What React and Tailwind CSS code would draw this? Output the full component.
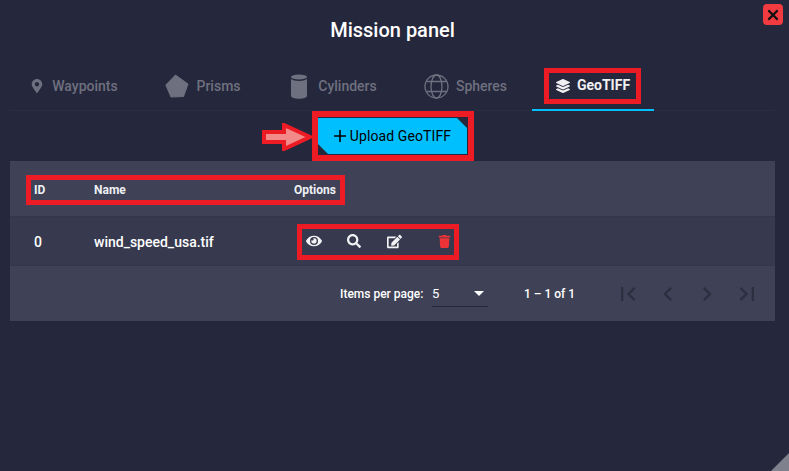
import React from "react";
import { FaMapMarkerAlt, FaLayerGroup, FaEye, FaSearch, FaEdit, FaTrash } from "react-icons/fa";

function Pentagon() {
  return (
    <svg width="24" height="24" viewBox="0 0 24 24" fill="currentColor" stroke="currentColor" strokeWidth="1" strokeLinejoin="round">
      <path d="M10.500 1 L23 10 L18.500 22.500 L6 23 L0.800 11 Z" />
    </svg>
  );
}

function Cylinder() {
  return (
    <svg width="18" height="25" viewBox="0 0 18 25" fill="currentColor">
      <ellipse cx="9" cy="3" rx="8" ry="2.6" />
      <path d="M1 5c1.5 1.3 4.5 2 8 2s6.5-.7 8-2v17c0 1.6-3.6 2.8-8 2.8S1 23.600 1 22z" />
    </svg>
  );
}

function Globe() {
  return (
    <svg width="25" height="25" viewBox="0 0 25 25" fill="none" stroke="currentColor" strokeWidth="1.3">
      <circle cx="12.5" cy="12.500" r="11.500" />
      <ellipse cx="12.5" cy="12.500" rx="5.500" ry="11.500" />
      <path d="M2.500 7.500h20M2.500 17.500h20" />
    </svg>
  );
}

function PageIcon({ d }) {
  return (
    <svg width="28" height="28" viewBox="0 0 24 24" fill="#2d2f41">
      <path d={d} />
    </svg>
  );
}

const tabs = [
  { label: "Waypoints", icon: <FaMapMarkerAlt size={14} />, width: "w-[128px]", gap: "gap-[8px]" },
  { label: "Prisms", icon: <Pentagon />, width: "w-[128px]", gap: "gap-[7px]" },
  { label: "Cylinders", icon: <Cylinder />, width: "w-[131px]", gap: "gap-[10px]" },
  { label: "Spheres", icon: <Globe />, width: "w-[131px]", gap: "gap-[7px]" },
];

const pageIcons = [
  "M18.41 16.59L13.82 12l4.59-4.59L17 6l-6 6 6 6zM6 6h2v12H6z",
  "M15.41 7.41L14 6l-6 6 6 6 1.41-1.41L10.83 12z",
  "M10 6L8.59 7.41 13.17 12l-4.58 4.59L10 18l6-6z",
  "M5.59 7.41L10.18 12l-4.59 4.59L7 18l6-6-6-6zM16 6h2v12h-2z",
];

export default function App() {
  return (
    <div className="relative w-[789px] h-[471px] overflow-hidden bg-[#25273c] font-['Roboto',sans-serif] text-white">
      {/* Close + resize corner */}
      <button className="absolute top-[4px] right-[6px] w-[20px] h-[21px] rounded-[4px] bg-[#f13b40] flex items-center justify-center">
        <svg width="12" height="12" viewBox="0 0 12 12" stroke="#111" strokeWidth="2.400" strokeLinecap="round">
          <path d="M2 2l8 8M10 2l-8 8" />
        </svg>
      </button>
      <div className="absolute bottom-0 right-0 w-[18px] h-[18px] bg-[#7f818d] [clip-path:polygon(100%_0,100%_100%,0_100%)]" />

      <div className="w-[765px] ml-[10px] flex flex-col">
        <h1 className="h-[60px] flex items-center justify-center text-[20px] font-medium">Mission panel</h1>

        {/* Tabs */}
        <div className="relative h-[51px] flex border-b border-[#2b2d42]">
          {tabs.map((tab) => (
            <div key={tab.label} className={`${tab.width} ${tab.gap} mr-[1px] h-[50px] pt-[2px] flex items-center justify-center text-[#6e707f] text-[14px] font-medium`}>
              {tab.icon}
              <span>{tab.label}</span>
            </div>
          ))}
          <div className="w-[122px] h-[51px] pt-[2px] flex items-center justify-center gap-[7px] border-b-2 border-[#00bfff] text-[14px] font-bold text-[#f0f0f2]">
            <FaLayerGroup size={14} />
            <span>GeoTIFF</span>
          </div>
          <div className="absolute left-[534px] top-[8px] w-[97px] h-[36px] border-[5px] border-[#ed1c24]" />
        </div>

        {/* Upload */}
        <div className="relative h-[50px] flex items-center justify-center">
          <button className="w-[149px] h-[36px] flex items-center justify-center gap-[4px] bg-[#00bfff] text-black text-[14px] font-normal tracking-[0.1px] [clip-path:polygon(0_0,calc(100%-10px)_0,100%_10px,100%_100%,10px_100%,0_calc(100%-10px))]">
            <svg width="12" height="12" viewBox="0 0 12 12" stroke="#000" strokeWidth="1.600">
              <path d="M6 0v12M0 6h12" />
            </svg>
            Upload GeoTIFF
          </button>
          <div className="absolute left-[302px] top-0 w-[162px] h-[50px] border-[6px] border-[#ed1c24]" />
          <svg className="absolute left-[252px] top-[12px]" width="50" height="28" viewBox="0 0 50 28">
            <path d="M2 9h20V2l26 12-26 12v-7H2z" fill="#f28a8a" stroke="#ed1c24" strokeWidth="4" />
          </svg>
        </div>

        {/* Table */}
        <div className="relative text-[12px]">
          <div className="h-[55px] pt-[2px] flex items-center bg-[#3f4256] font-bold text-[#eef0f4]">
            <div className="w-[84px] pl-[24px]">ID</div>
            <div className="w-[200px]">Name</div>
            <div>Options</div>
          </div>
          <div className="absolute left-[16px] top-[14px] w-[319px] h-[30px] border-[5px] border-[#ed1c24]" />

          <div className="h-[49px] flex items-center bg-[#373a4e] border-t border-[#34374a] text-[14px] font-medium">
            <div className="w-[84px] pl-[24px] pt-[2px]">0</div>
            <div className="w-[200px] pt-[2px]">wind_speed_usa.tif</div>
            <div className="flex items-center ml-[10px] text-[#f2f2f4]">
              <span className="w-[40px] -ml-[10px] flex justify-center"><FaEye size={16} /></span>
              <span className="w-[40px] flex justify-center"><FaSearch size={14} /></span>
              <span className="w-[40px] flex justify-center"><FaEdit size={15} /></span>
              <span className="w-[40px] ml-[10px] flex justify-center text-[#ee3338]"><FaTrash size={13} /></span>
            </div>
          </div>
          <div className="absolute left-[287px] top-[63px] w-[162px] h-[36px] border-[5px] border-[#ed1c24]" />

          <div className="h-[56px] flex items-center bg-[#3f4256] border-t border-[#34374a] font-medium">
            <span className="ml-[330px] w-[92px]">Items per page:</span>
            <div className="relative w-[56px] h-[24px] mt-[3px] flex items-center border-b border-[#25273c] text-[13px]">
              <span className="pb-[2px] font-normal">5</span>
              <span className="absolute right-[4px] top-[8px] w-0 h-0 border-x-[5px] border-t-[5px] border-x-transparent border-t-white" />
            </div>
            <span className="ml-[36px] w-[60px] text-[12px]">1 – 1 of 1</span>
            <div className="flex items-center ml-[30px] gap-[11.500px]">
              {pageIcons.map((d) => (
                <PageIcon key={d} d={d} />
              ))}
            </div>
          </div>
        </div>
      </div>
    </div>
  );
}
